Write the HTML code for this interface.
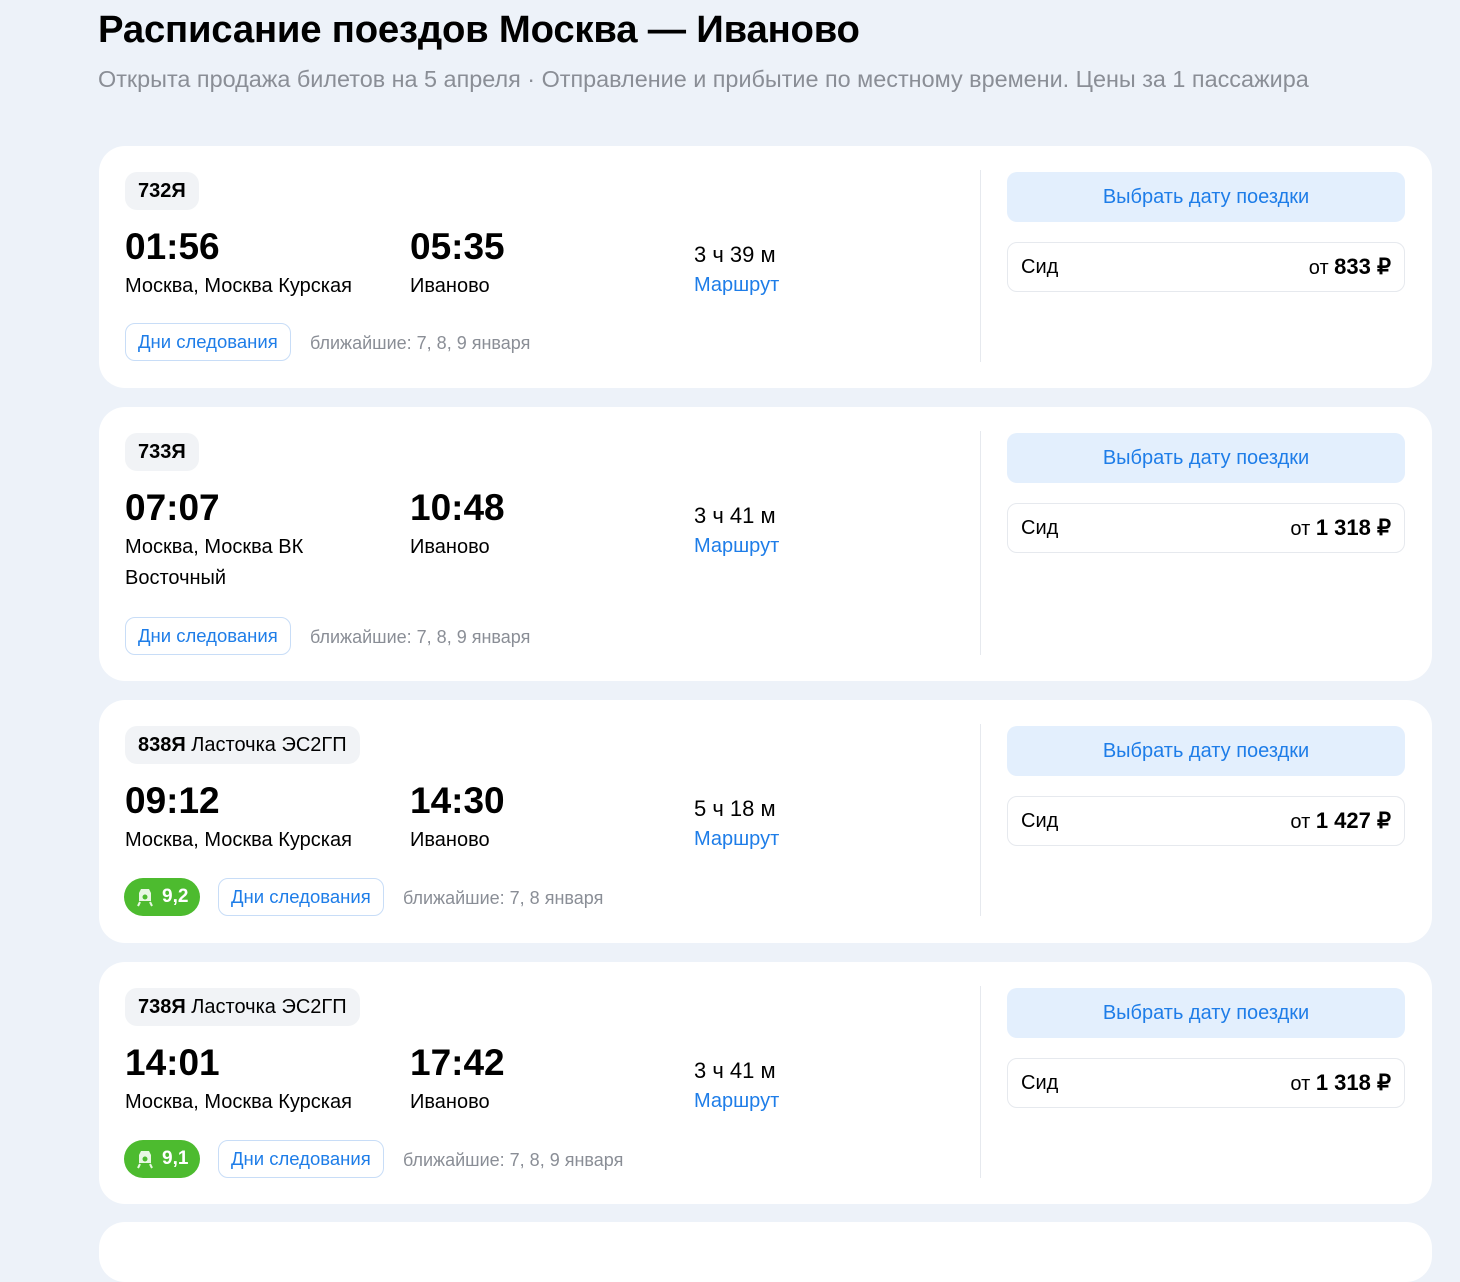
<!DOCTYPE html>
<html><head><meta charset="utf-8"><style>
*{margin:0;padding:0;box-sizing:border-box}
body{width:1460px;height:1225px;overflow:hidden;background:#edf2f9;font-family:"Liberation Sans","Noto Sans CJK SC",sans-serif;color:#000;position:relative}
.a{position:absolute;white-space:nowrap}
h1{position:absolute;left:98px;top:8px;font-size:38.3px;font-weight:bold;letter-spacing:-0.2px}
.sub{left:98px;top:66px;font-size:23.4px;color:#8a8e96}
.card{position:absolute;left:99px;width:1333px;background:#fff;border-radius:26px}
.badge{left:26px;top:26px;height:38px;background:#f1f3f6;border-radius:12px;padding:0 13px;font-size:20px;line-height:38px}
.badge b{font-weight:bold}
.t{font-size:37px;font-weight:bold;top:80px}
.st{font-size:20px;line-height:31px;top:125px}
.dur{left:595px;top:96px;font-size:22px}
.rt{left:595px;top:128px;font-size:20px;color:#1e7de8}
.days{height:38px;border:1px solid #c8ddf7;border-radius:10px;padding:0 12px;font-size:18.5px;line-height:36px;color:#1e7de8}
.near{font-size:18px;color:#8a8e96;line-height:38px}
.div{left:881px;top:24px;width:1px;background:#e6e9ee}
.btn{left:908px;top:26px;width:398px;height:50px;background:#e3effd;border-radius:10px;color:#1e7de8;font-size:20px;text-align:center;line-height:50px}
.price{left:908px;top:96px;width:398px;height:50px;border:1px solid #e6e9ee;border-radius:10px;font-size:20px;line-height:48px;padding:0 13px}
.price span{float:right}
.price b{font-size:22px}
.rating{height:38px;width:76px;background:#4dbb2f;border-radius:19px;color:#fff;font-size:19px;font-weight:bold;line-height:38px;padding-left:38px}
.rating svg{position:absolute;left:12px;top:9px}
</style></head><body>
<h1>Расписание поездов Москва — Иваново</h1>
<div class="a sub">Открыта продажа билетов на 5 апреля · Отправление и прибытие по местному времени. Цены за 1 пассажира</div>

<div class="card" style="top:146px;height:242px">
<div class="a badge"><b>732Я</b></div>
<div class="a t" style="left:26px">01:56</div><div class="a t" style="left:311px">05:35</div>
<div class="a st" style="left:26px">Москва, Москва Курская</div><div class="a st" style="left:311px">Иваново</div>
<div class="a dur">3 ч 39 м</div><div class="a rt">Маршрут</div>
<div class="a days" style="left:26px;top:177px">Дни следования</div><div class="a near" style="left:211px;top:178px">ближайшие: 7, 8, 9 января</div>
<div class="a div" style="height:192px"></div>
<div class="a btn">Выбрать дату поездки</div>
<div class="a price">Сид<span>от <b>833 ₽</b></span></div>
</div>

<div class="card" style="top:407px;height:274px">
<div class="a badge"><b>733Я</b></div>
<div class="a t" style="left:26px">07:07</div><div class="a t" style="left:311px">10:48</div>
<div class="a st" style="left:26px">Москва, Москва ВК<br>Восточный</div><div class="a st" style="left:311px">Иваново</div>
<div class="a dur">3 ч 41 м</div><div class="a rt">Маршрут</div>
<div class="a days" style="left:26px;top:210px">Дни следования</div><div class="a near" style="left:211px;top:211px">ближайшие: 7, 8, 9 января</div>
<div class="a div" style="height:224px"></div>
<div class="a btn">Выбрать дату поездки</div>
<div class="a price">Сид<span>от <b>1 318 ₽</b></span></div>
</div>

<div class="card" style="top:700px;height:243px">
<div class="a badge"><b>838Я</b> Ласточка ЭС2ГП</div>
<div class="a t" style="left:26px">09:12</div><div class="a t" style="left:311px">14:30</div>
<div class="a st" style="left:26px">Москва, Москва Курская</div><div class="a st" style="left:311px">Иваново</div>
<div class="a dur">5 ч 18 м</div><div class="a rt">Маршрут</div>
<div class="a rating" style="left:25px;top:178px"><svg width="18" height="20" viewBox="0 0 18 20"><path d="M5 2h8l2 4v8H3V6z" fill="#e8f7e3"/><circle cx="9" cy="10" r="2.5" fill="#4dbb2f"/><path d="M4 15l-2 4M14 15l2 4" stroke="#e8f7e3" stroke-width="2"/></svg>9,2</div>
<div class="a days" style="left:119px;top:178px">Дни следования</div><div class="a near" style="left:304px;top:179px">ближайшие: 7, 8 января</div>
<div class="a div" style="height:192px"></div>
<div class="a btn">Выбрать дату поездки</div>
<div class="a price">Сид<span>от <b>1 427 ₽</b></span></div>
</div>

<div class="card" style="top:962px;height:242px">
<div class="a badge"><b>738Я</b> Ласточка ЭС2ГП</div>
<div class="a t" style="left:26px">14:01</div><div class="a t" style="left:311px">17:42</div>
<div class="a st" style="left:26px">Москва, Москва Курская</div><div class="a st" style="left:311px">Иваново</div>
<div class="a dur">3 ч 41 м</div><div class="a rt">Маршрут</div>
<div class="a rating" style="left:25px;top:178px"><svg width="18" height="20" viewBox="0 0 18 20"><path d="M5 2h8l2 4v8H3V6z" fill="#e8f7e3"/><circle cx="9" cy="10" r="2.5" fill="#4dbb2f"/><path d="M4 15l-2 4M14 15l2 4" stroke="#e8f7e3" stroke-width="2"/></svg>9,1</div>
<div class="a days" style="left:119px;top:178px">Дни следования</div><div class="a near" style="left:304px;top:179px">ближайшие: 7, 8, 9 января</div>
<div class="a div" style="height:192px"></div>
<div class="a btn">Выбрать дату поездки</div>
<div class="a price">Сид<span>от <b>1 318 ₽</b></span></div>
</div>

<div class="card" style="top:1222px;height:60px"></div>
</body></html>
